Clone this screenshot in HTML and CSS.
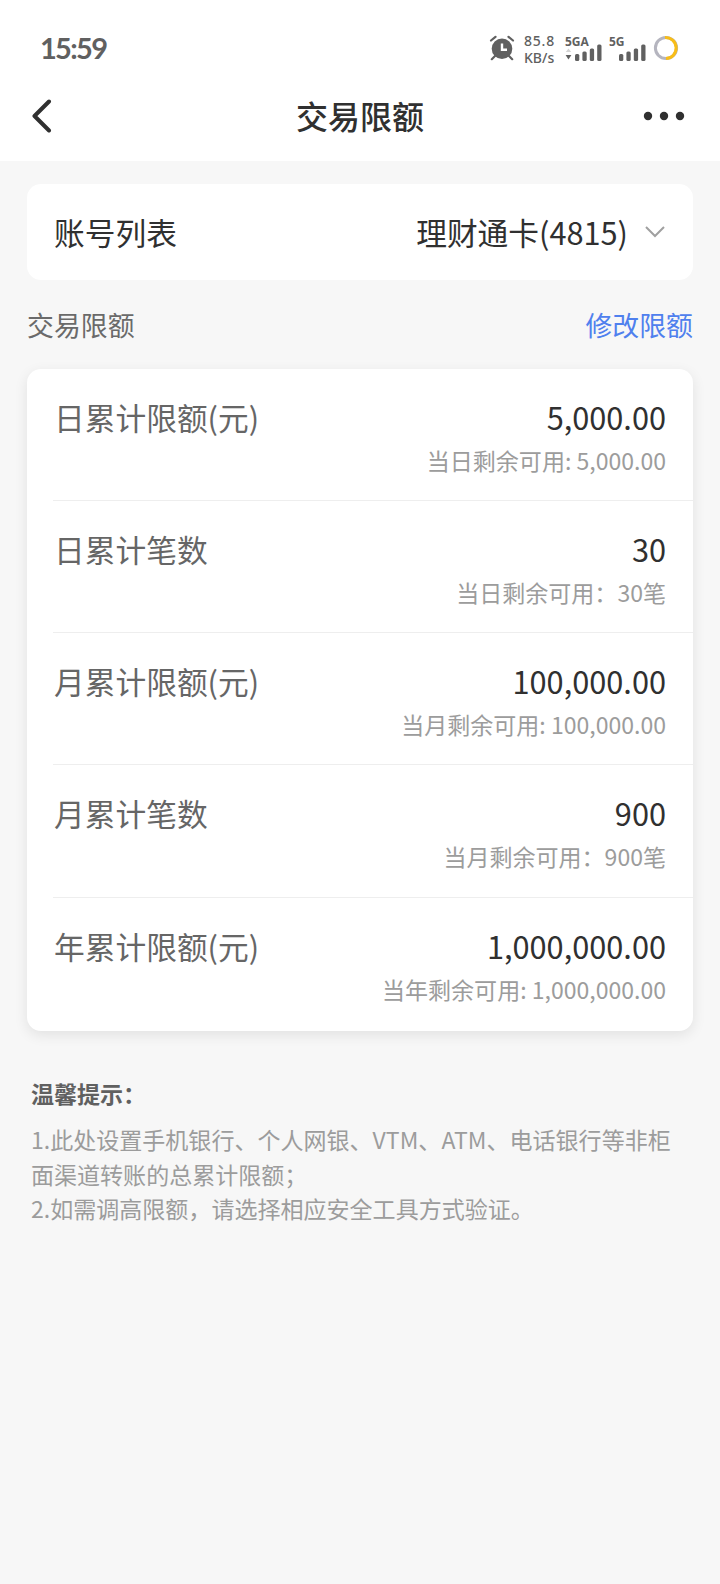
FILE: index.html
```html
<!DOCTYPE html>
<html lang="zh-CN">
<head>
<meta charset="utf-8">
<title>交易限额</title>
<link rel="stylesheet" href="styles.css">
</head>
<body>
<header class="top">
  <div class="status">
    <span class="time">15:59</span>
    <div class="indicators">
      <svg class="alarm" width="26" height="26" viewBox="0 0 26 26">
        <circle cx="13" cy="13.800" r="10.300" fill="#606060"/>
        <path d="M2 5.500 6.500 1.800M24 5.500 19.500 1.800M6 21l-3.200 3.200M20 21l3.200 3.200" stroke="#606060" stroke-width="2.200" stroke-linecap="round"/>
        <path d="M13 8.500v6.200h5" fill="none" stroke="#fff" stroke-width="2.400"/>
      </svg>
      <div class="speed"><span class="rate">85.8</span><span>KB/s</span></div>
      <div class="net">
        <span class="gen">5GA</span>
        <svg width="38" height="18" viewBox="0 0 38 18">
          <path d="M.8 8h5.400L3.500 4.500z" fill="#d4d4d4"/><path d="M.6 11h5.800L3.500 15.500z" fill="#606060"/>
          <g fill="#606060"><rect x="10" y="10" width="4.300" height="7" rx="1.500"/><rect x="17.400" y="7.500" width="4.300" height="9.500" rx="1.500"/><rect x="24.800" y="4.500" width="4.300" height="12.500" rx="1.500"/><rect x="32.200" y=".5" width="4.300" height="16.500" rx="1.500"/></g>
        </svg>
      </div>
      <div class="net">
        <span class="gen">5G</span>
        <svg width="38" height="18" viewBox="0 0 38 18">
          <g fill="#606060"><rect x="10" y="10" width="4.300" height="7" rx="1.500"/><rect x="17.400" y="7.500" width="4.300" height="9.500" rx="1.500"/><rect x="24.800" y="4.500" width="4.300" height="12.500" rx="1.500"/><rect x="32.200" y=".5" width="4.300" height="16.500" rx="1.500"/></g>
        </svg>
      </div>
      <svg class="ring" width="26" height="26" viewBox="0 0 26 26" fill="none" stroke-width="3">
        <circle cx="13" cy="13" r="10.600" stroke="#b5b5bf"/>
        <path d="M12 2.400A10.600 10.600 0 1 1 13 23.600" stroke="#f8bd18"/>
      </svg>
    </div>
  </div>
  <nav class="nav">
    <svg width="20" height="34" viewBox="0 0 20 34"><path d="M17 2.500 2.500 17 17 31.500" fill="none" stroke="#303030" stroke-width="4" stroke-linecap="round" stroke-linejoin="round"/></svg>
    <h1 class="title">交易限额</h1>
    <svg class="more" width="42" height="10" viewBox="0 0 42 10" fill="#303030"><circle cx="5" cy="5" r="4.200"/><circle cx="21" cy="5" r="4.200"/><circle cx="37" cy="5" r="4.200"/></svg>
  </nav>
</header>
<main class="content">
  <section class="account">
    <span>账号列表</span>
    <div class="picker"><span>理财通卡(4815)</span>
      <svg width="20" height="13" viewBox="0 0 20 13"><path d="M1 2 10 11 19 2" fill="none" stroke="#a0a0a0" stroke-width="2"/></svg>
    </div>
  </section>
  <div class="section-head"><span>交易限额</span><a class="edit">修改限额</a></div>
  <section class="limits">
    <div class="row"><span class="label">日累计限额(元)</span><div class="amount"><span class="value">5,000.00</span><span class="rest">当日剩余可用: 5,000.00</span></div></div>
    <div class="row"><span class="label">日累计笔数</span><div class="amount"><span class="value">30</span><span class="rest">当日剩余可用：30笔</span></div></div>
    <div class="row"><span class="label">月累计限额(元)</span><div class="amount"><span class="value">100,000.00</span><span class="rest">当月剩余可用: 100,000.00</span></div></div>
    <div class="row"><span class="label">月累计笔数</span><div class="amount"><span class="value">900</span><span class="rest">当月剩余可用：900笔</span></div></div>
    <div class="row"><span class="label">年累计限额(元)</span><div class="amount"><span class="value">1,000,000.00</span><span class="rest">当年剩余可用: 1,000,000.00</span></div></div>
  </section>
  <section class="tips">
    <h2 class="tips-title">温馨提示：</h2>
    <p>1.此处设置手机银行、个人网银、VTM、ATM、电话银行等非柜面渠道转账的总累计限额；</p>
    <p>2.如需调高限额，请选择相应安全工具方式验证。</p>
  </section>
</main>
</body>
</html>
```
FILE: styles.css
```css
* { box-sizing: border-box; }
body {
  margin: 0;
  min-height: 1584px;
  background: #f7f7f7;
  color: #303030;
  font-family: "Noto Sans CJK SC", sans-serif;
}
svg { display: block; flex: none; }
.top { height: 161px; background: #fff; }
.status {
  display: flex;
  justify-content: space-between;
  height: 72px;
  padding: 30px 42px 0 40px;
  color: #606060;
}
.time {
  font: 700 29px/36px Lato, sans-serif;
  letter-spacing: -1.700px;
}
.indicators { display: flex; }
.alarm { margin: 5px 9px 0 0; }
.speed {
  width: 41px;
  padding-top: 3px;
  display: flex;
  flex-direction: column;
  font: 500 14px/16.500px "Noto Sans", sans-serif;
}
.rate { letter-spacing: .8px; }
.net { width: 44px; padding-top: 4px; }
.gen { display: block; height: 10px; font: 700 12px/15px "Open Sans", sans-serif; }
.ring { margin: 5px -1px 0 0; }
.nav {
  display: grid;
  grid-template-columns: 1fr auto 1fr;
  align-items: center;
  height: 88px;
  padding: 0 35px 0 32px;
}
.more { justify-self: end; }
.title { margin: 0 0 0 3px; padding-bottom: 3px; font-size: 32px; font-weight: 500; line-height: 48px; }
.content { padding: 23px 27px 0; }
.account {
  display: flex;
  align-items: center;
  justify-content: space-between;
  height: 96px;
  padding: 0 28px 1px 27px;
  border-radius: 14px;
  background: #fff;
  font-size: 30.720px;
}
.picker { display: flex; align-items: center; gap: 17px; }
.section-head {
  display: flex;
  align-items: center;
  justify-content: space-between;
  height: 88.500px;
  font-size: 26.880px;
  color: #6a6a6a;
}
.edit { color: #4f80ee; }
.limits {
  padding-left: 26px;
  border-radius: 14px;
  background: #fff;
  box-shadow: 0 4px 14px rgba(0, 0, 0, .09);
}
.row {
  display: flex;
  justify-content: space-between;
  height: 132.300px;
  padding: 25px 27px 0 1px;
  border-bottom: 1px solid #eee;
}
.row:last-child { height: 133px; border-bottom: 0; }
.label { font-size: 30.720px; line-height: 46px; color: #666; }
.amount { display: flex; flex-direction: column; align-items: flex-end; }
.value { font-size: 30.720px; line-height: 46px; }
.rest { font-size: 23.040px; line-height: 40px; color: #9c9c9c; }
.tips {
  padding: 45px 14px 0 4px;
  font-size: 23.040px;
  line-height: 34.560px;
  color: #9c9c9c;
}
.tips p { margin: 0; }
.tips-title { margin: 0 0 12px; font-size: 23.040px; font-weight: 700; line-height: 34.560px; color: #606060; }
```
